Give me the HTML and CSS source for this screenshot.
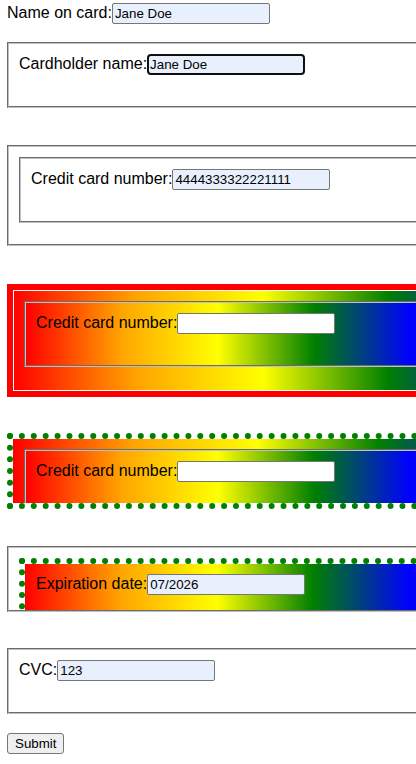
FILE: index.html
```html
<!DOCTYPE html>
<html>
<head>
<meta charset="utf-8">
<title>Card form</title>
<link rel="stylesheet" href="styles.css">
</head>
<body>
<form class="page">
  <div class="row first"><label>Name on card:<input class="field filled" value="Jane Doe"></label></div>

  <div class="groove box-1">
    <div class="lines"><label>Cardholder name:<input class="field filled focused" value="Jane Doe"></label></div>
  </div>

  <div class="groove box-2">
    <div class="groove inner-plain">
      <div class="lines"><label>Credit card number:<input class="field filled" value="4444333322221111"></label></div>
    </div>
  </div>

  <div class="red-frame rainbow box-3">
    <div class="groove inner-rainbow rainbow">
      <div class="lines"><label>Credit card number:<input class="field"></label></div>
    </div>
  </div>

  <div class="dotted-frame rainbow box-4">
    <div class="groove inner-rainbow rainbow">
      <div class="lines"><label>Credit card number:<input class="field"></label></div>
    </div>
  </div>

  <div class="groove clip box-5">
    <div class="dotted-inner rainbow">
      <div class="lines"><label>Expiration date:<input class="field filled" value="07/2026"></label></div>
    </div>
  </div>

  <div class="groove box-6">
    <div class="lines"><label>CVC:<input class="field filled" value="123"></label></div>
  </div>

  <button type="button" class="submit">Submit</button>
</form>
</body>
</html>
```

FILE: styles.css
```css
body {
  margin: 0;
  padding: 3px 0 0 7px;
  font-family: "Liberation Sans", Arial, sans-serif;
  font-size: 16px;
  color: #000;
  background: #fff;
}

.page {
  display: block;
  margin: 0;
  overflow: hidden;
}

.row {
  height: 21px;
  white-space: nowrap;
}

.lines {
  height: 42px;
  white-space: nowrap;
}

.field {
  box-sizing: border-box;
  width: 158px;
  height: 21px;
  margin: 0;
  padding: 1px 2px;
  border: 1px solid #767676;
  border-radius: 2px;
  background: #fff;
  color: #000;
  font-family: "Liberation Sans", Arial, sans-serif;
  font-size: 13.333px;
  outline: none;
}

.filled {
  background: #e8f0fe;
}

.focused {
  border: 2px solid #101010;
  border-radius: 4px;
  padding: 0 1px;
}

.groove {
  box-sizing: border-box;
  margin: 0;
  padding: 10px;
  border: 2px groove rgb(192, 192, 192);
}

.rainbow {
  background-image: linear-gradient(to right, red, orange, yellow, green, blue, indigo, violet);
  background-origin: padding-box;
}

.box-1 {
  width: 760px;
  margin-top: 18px;
}

.box-2 {
  width: 760px;
  margin-top: 37px;
  padding-bottom: 21px;
}

.inner-plain {
  width: 700px;
}

.box-3 {
  box-sizing: border-box;
  width: 762px;
  margin-top: 38px;
  padding: 11px 11px 24px;
  border: 6px solid red;
  box-shadow: inset 0 0 0 1px #fff;
}

.inner-rainbow {
  width: 580px;
}

.box-4 {
  box-sizing: border-box;
  width: 744px;
  height: 76px;
  margin-top: 36px;
  padding: 10px 11px;
  border: 6px dotted green;
  background-clip: padding-box;
  overflow: hidden;
}

.clip {
  overflow: hidden;
}

.box-5 {
  width: 760px;
  height: 66px;
  margin-top: 37px;
}

.dotted-inner {
  box-sizing: border-box;
  width: 588px;
  padding: 10px 11px;
  border: 6px dotted green;
  background-clip: padding-box;
}

.box-6 {
  width: 760px;
  margin-top: 36px;
}

.submit {
  display: block;
  box-sizing: border-box;
  height: 21px;
  margin: 19px 0 2px;
  padding: 1px 7px;
  border: 1px solid #767676;
  border-radius: 3px;
  background: #efefef;
  color: #000;
  font-family: "Liberation Sans", Arial, sans-serif;
  font-size: 13.333px;
}
```
